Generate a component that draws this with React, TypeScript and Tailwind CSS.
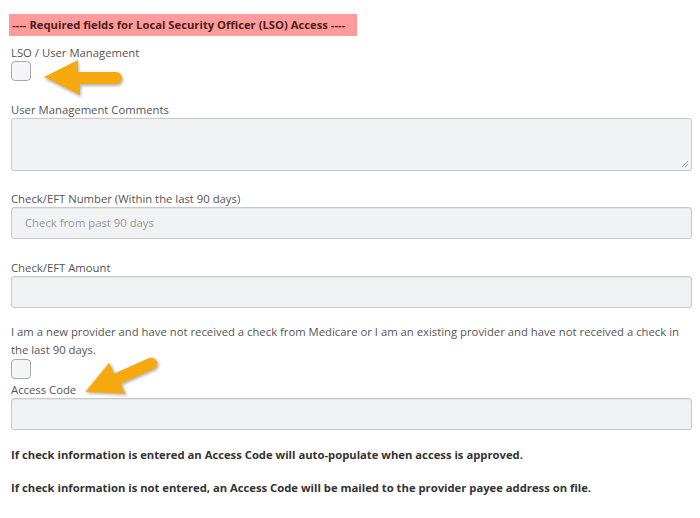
import React from 'react';

function Arrow({ className }: { className: string }) {
  return (
    <svg
      className={className}
      width="84"
      height="42"
      viewBox="0 0 84 42"
      style={{ filter: 'drop-shadow(1px 2px 1.5px rgba(0,0,0,0.3))' }}
    >
      <path d="M4 20 L38 3 L38 15 L76 15 A6 6 0 0 1 76 27 L40 27 L40 38 Z" fill="#f6a90f" />
    </svg>
  );
}

function Checkbox() {
  return <div className="h-[20px] w-[20px] rounded-[4px] border border-[#a9a9a9] bg-[#f4f5f6]" />;
}

function TextInput({ placeholder }: { placeholder?: string }) {
  return (
    <div className="h-[32px] w-[681px] rounded-[3px] border border-[#c9c9c9] bg-[#f1f2f4] px-[13px] text-[11.3px] leading-[30px] text-[#9a9a9a] shadow-[inset_0_1px_1px_rgba(0,0,0,0.06)]">
      {placeholder}
    </div>
  );
}

export default function App() {
  return (
    <div className="relative h-[518px] w-[700px] overflow-hidden bg-white pl-[11px] pt-[14px] font-['Open_Sans',sans-serif] text-[11.3px] text-[#555]">
      {/* LSO header */}
      <div className="-ml-[2px] h-[22px] w-[348px] bg-[#ff9b9b] pl-[3px] text-[11.25px] font-bold leading-[22px] text-[#4b1e1e]">
        ---- Required fields for Local Security Officer (LSO) Access ----
      </div>

      <div className="mt-[9px] leading-[16px]">LSO / User Management</div>
      <Checkbox />

      <div className="mt-[21px] leading-[16px]">User Management Comments</div>
      <div className="relative h-[53px] w-[681px] rounded-[3px] border border-[#c9c9c9] bg-[#f1f2f4]">
        <svg className="absolute bottom-[2px] right-[2px]" width="9" height="9" viewBox="0 0 9 9">
          <path d="M8 2 L2 8 M8 5 L5 8" stroke="#999" strokeWidth="1" />
        </svg>
      </div>

      <div className="mt-[20px] leading-[16px]">Check/EFT Number (Within the last 90 days)</div>
      <TextInput placeholder="Check from past 90 days" />

      <div className="mt-[21px] leading-[16px]">Check/EFT Amount</div>
      <TextInput />

      <p className="mt-[15px] w-[680px] leading-[18px]">
        I am a new provider and have not received a check from Medicare or I am an existing provider and have not received a check in the last 90 days.
      </p>
      <Checkbox />

      <div className="mt-[3px] leading-[16px]">Access Code</div>
      <TextInput />

      <p className="mt-[17px] text-[11.25px] font-bold leading-[16px] text-[#333]">
        If check information is entered an Access Code will auto-populate when access is approved.
      </p>
      <p className="mt-[17px] text-[11.25px] font-bold leading-[16px] text-[#333]">
        If check information is not entered, an Access Code will be mailed to the provider payee address on file.
      </p>

      {/* annotation arrows */}
      <Arrow className="absolute left-[40px] top-[57px]" />
      <Arrow className="absolute left-[81px] top-[372px] origin-[4px_20px] rotate-[-24deg]" />
    </div>
  );
}
